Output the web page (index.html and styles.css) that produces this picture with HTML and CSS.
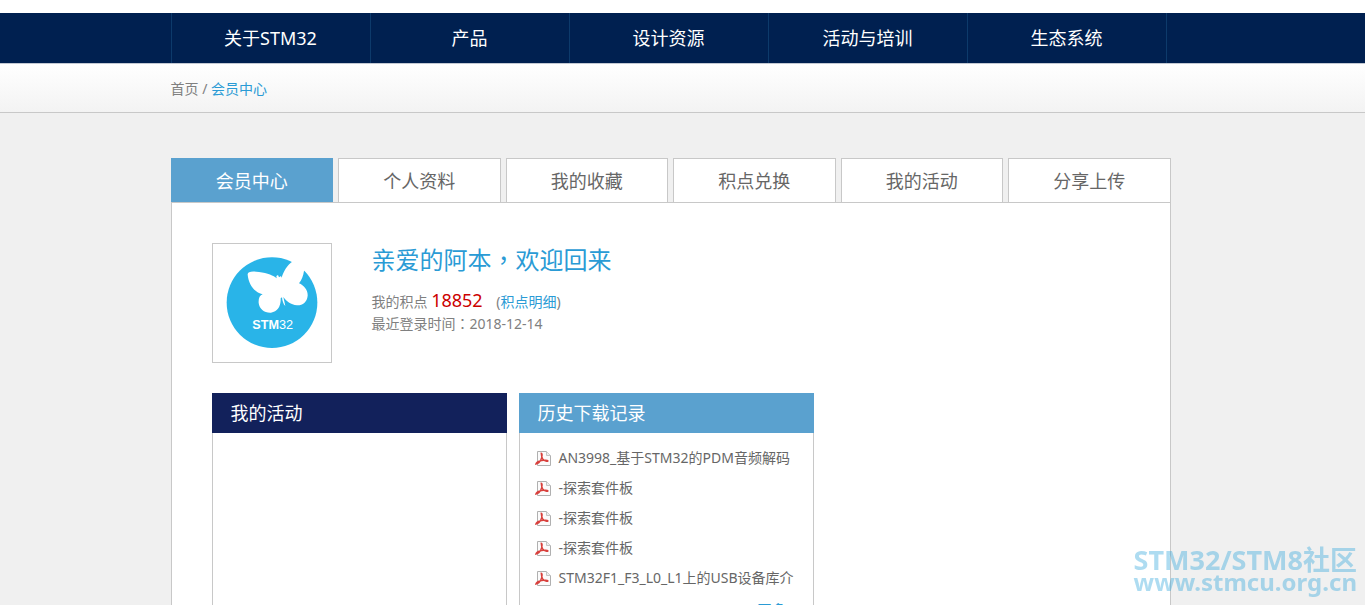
FILE: index.html
```html
<!DOCTYPE html>
<html lang="zh-CN">
<head>
    <meta charset="utf-8">
    <title>会员中心</title>
    <link rel="stylesheet" href="styles.css">
</head>
<body>
    <svg class="sprite" aria-hidden="true">
        <symbol id="pdf" viewBox="0 0 16 16">
            <path d="M2.500 1.500h9l4 4v10h-13z" fill="#fbfbfb" stroke="#b0b0b0"/>
            <path d="M11.500 1.500v4h4" fill="#eee" stroke="#c4c4c4"/>
            <path d="M6.200 3.200C7.400 3.200 7.300 5.200 6.800 7.200C6 10 3.600 13.600 .8 14.200C1 12.800 3.500 11.300 6.500 10.500C9.500 9.900 12.500 9.900 13 10.900C12.500 12 9.500 11.200 8 9.300C6.800 7.800 6.200 5.500 6.200 3.200Z" fill="none" stroke="#d8403c" stroke-width="1.300"/>
        </symbol>
    </svg>

    <nav class="nav">
        <div class="wrap">
            <ul class="nav-list">
                <li><a href="#">关于STM32</a></li>
                <li><a href="#">产品</a></li>
                <li><a href="#">设计资源</a></li>
                <li><a href="#">活动与培训</a></li>
                <li><a href="#">生态系统</a></li>
            </ul>
        </div>
    </nav>

    <div class="crumbs">
        <div class="wrap">
            <a href="#">首页</a> / <a class="current" href="#">会员中心</a>
        </div>
    </div>

    <div class="wrap main">
        <div class="tabs">
            <a class="active" href="#">会员中心</a>
            <a href="#">个人资料</a>
            <a href="#">我的收藏</a>
            <a href="#">积点兑换</a>
            <a href="#">我的活动</a>
            <a href="#">分享上传</a>
        </div>

        <div class="panel">
            <div class="user">
                <div class="avatar">
                    <svg viewBox="24 27 354 354" role="img" aria-label="STM32">
                        <circle cx="201" cy="203" r="136" fill="#29b4e8"/>
                        <path d="M128 119C127 109 142 108 162 111C188 114 206 122 215 130L214 123L219 120L222 127L228 123L230 128C236 110 246 90 264 79L290 55L322 84L297 108C295 122 290 135 282 145C297 151 309 166 308 182C306 202 292 212 276 211C257 209 244 198 235 186L241 213C235 208 232 198 231 187L227 190C228 215 217 231 198 233C178 234 163 222 161 204C160 190 164 181 173 178C148 172 131 148 128 119Z" fill="#fff"/>
                        <text class="logo-text" x="142" y="283"><tspan class="logo-bold">STM</tspan>32</text>
                    </svg>
                </div>
                <div class="info">
                    <h1>亲爱的阿本<span class="punct" lang="zh-TW">，</span>欢迎回来</h1>
                    <p>我的积点 <strong>18852</strong> <span class="detail">(<a href="#">积点明细</a>)</span></p>
                    <p>最近登录时间<span class="punct" lang="zh-TW">：</span>2018-12-14</p>
                </div>
            </div>

            <div class="boxes">
                <div class="box">
                    <h2 class="dark">我的活动</h2>
                    <div class="box-body"></div>
                </div>
                <div class="box">
                    <h2>历史下载记录</h2>
                    <div class="box-body">
                        <ul class="files">
                            <li><svg class="icon"><use href="#pdf"/></svg><a href="#">AN3998_基于STM32的PDM音频解码</a></li>
                            <li><svg class="icon"><use href="#pdf"/></svg><a href="#">-探索套件板</a></li>
                            <li><svg class="icon"><use href="#pdf"/></svg><a href="#">-探索套件板</a></li>
                            <li><svg class="icon"><use href="#pdf"/></svg><a href="#">-探索套件板</a></li>
                            <li><svg class="icon"><use href="#pdf"/></svg><a href="#">STM32F1_F3_L0_L1上的USB设备库介</a></li>
                        </ul>
                        <a class="more" href="#">更多</a>
                    </div>
                </div>
            </div>
        </div>
    </div>

    <div class="watermark">
        <div class="community">STM32/STM8社区</div>
        <div>www.stmcu.org.cn</div>
    </div>
</body>
</html>
```
FILE: styles.css
```css
* {
    box-sizing: border-box;
}

body {
    margin: 0;
    padding-top: 13px;
    background: linear-gradient(#fff 13px, #f0f0f0 13px);
    font: 14px/22px "Noto Sans", "Noto Sans CJK SC", sans-serif;
    color: #808080;
}

ul, h1, h2, p {
    margin: 0;
    padding: 0;
    font-weight: normal;
    list-style: none;
}

a {
    color: inherit;
    text-decoration: none;
}

.sprite {
    display: none;
}

/* page column sits a little left of the middle */
.wrap {
    max-width: 1000px;
    margin: 0 auto;
}

.nav, .crumbs, .main {
    padding-right: 24px;
}

.main {
    max-width: 1024px;
}

/* top navigation */
.nav {
    background: #002050;
    border-bottom: 1px solid #c3c9d3;
}

.nav-list {
    display: grid;
    grid-template-columns: repeat(5, 1fr);
    max-width: 996px;
    border-left: 1px solid #0d3a6b;
}

.nav-list a {
    display: block;
    height: 50px;
    line-height: 50px;
    border-right: 1px solid #0d3a6b;
    color: #fff;
    font-size: 18px;
    text-align: center;
}

.crumbs {
    padding-top: 2px;
    line-height: 46px;
    background: linear-gradient(#fff, #f3f3f3);
    border-bottom: 1px solid #c8c8c8;
}

.current, .detail a, .more {
    color: #2a9bd5;
}

/* tabs */
.tabs {
    display: grid;
    grid-template-columns: repeat(6, 1fr);
    gap: 5px;
    margin-top: 45px;
}

.tabs a {
    height: 44px;
    line-height: 44px;
    background: #fff;
    border: 1px solid #c8c8c8;
    border-bottom: 0;
    color: #666;
    font-size: 18px;
    text-align: center;
}

.tabs .active {
    background: #5aa1cf;
    border-color: #5aa1cf;
    color: #fff;
}

.panel {
    padding: 40px;
    background: #fff;
    border: 1px solid #c8c8c8;
}

/* member summary */
.user {
    display: flex;
    gap: 40px;
}

.avatar {
    width: 120px;
    height: 120px;
    border: 1px solid #c8c8c8;
}

.avatar svg {
    display: block;
}

.logo-text {
    font: 38px "Liberation Sans Narrow", "Liberation Sans", sans-serif;
    fill: #fff;
}

.logo-bold {
    font-weight: bold;
}

.info h1 {
    margin-bottom: 12px;
    color: #2a9bd5;
    font-size: 24px;
    line-height: 34px;
}

.info strong {
    color: #c00;
    font-size: 18px;
    font-weight: normal;
}

/* centred full-width punctuation */
.punct {
    font-family: "Noto Sans CJK TC", sans-serif;
    line-height: 1;
}

.detail {
    margin-left: 10px;
}

/* boxes */
.boxes {
    display: grid;
    grid-template-columns: repeat(auto-fill, 295px);
    gap: 12px;
    margin-top: 30px;
    min-height: 300px;
}

.box {
    display: flex;
    flex-direction: column;
}

.box h2 {
    padding-left: 19px;
    background: #5aa1cf;
    color: #fff;
    font-size: 18px;
    line-height: 40px;
}

.box .dark {
    background: #12215b;
}

.box-body {
    flex: 1;
    padding: 10px 15px;
    border: 1px solid #c8c8c8;
    border-top: 0;
}

.files li {
    display: flex;
    align-items: center;
    gap: 8px;
    height: 30px;
    color: #666;
    white-space: nowrap;
}

.icon {
    flex: none;
    width: 16px;
    height: 16px;
}

.more {
    display: block;
    padding-right: 12px;
    line-height: 34px;
    text-align: right;
}

.watermark {
    position: fixed;
    right: 8px;
    bottom: 12px;
    color: rgba(41, 164, 217, .38);
    font-size: 24px;
    font-weight: bold;
    line-height: 22px;
    text-align: center;
}

.community {
    font-size: 27px;
}
```
